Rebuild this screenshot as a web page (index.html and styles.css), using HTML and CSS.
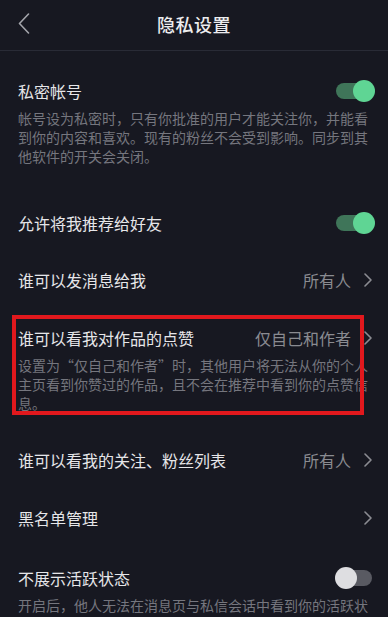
FILE: index.html
```html
<!DOCTYPE html>
<html lang="zh-CN">
<head>
<meta charset="utf-8">
<title>隐私设置</title>
<link rel="stylesheet" href="styles.css">
</head>
<body>
<div class="page">
  <header class="header">
    <span class="back">
      <svg width="12" height="21" viewBox="0 0 12 21"><path d="M10.5 1 L1.5 10.5 L10.5 20" fill="none" stroke="#a3a4aa" stroke-width="1.6" stroke-linecap="round" stroke-linejoin="round"/></svg>
    </span>
    <h1 class="title">隐私设置</h1>
  </header>

  <section class="item first">
    <div class="row">
      <span class="label">私密帐号</span>
      <span class="switch on"><span class="track"></span><span class="knob"></span></span>
    </div>
    <p class="desc">帐号设为私密时，只有你批准的用户才能关注你，并能看到你的内容和喜欢。现有的粉丝不会受到影响。同步到其他软件的开关会关闭。</p>
  </section>

  <section class="item after-desc-wide">
    <div class="row">
      <span class="label">允许将我推荐给好友</span>
      <span class="switch on"><span class="track"></span><span class="knob"></span></span>
    </div>
  </section>

  <section class="item tight">
    <div class="row">
      <span class="label">谁可以发消息给我</span>
      <span class="value">所有人<svg class="chev" width="8" height="14" viewBox="0 0 8 14"><path d="M1 1 L7 7 L1 13" fill="none" stroke="#8b8c92" stroke-width="1.6" stroke-linecap="round" stroke-linejoin="round"/></svg></span>
    </div>
  </section>

  <section class="item">
    <div class="row">
      <span class="label">谁可以看我对作品的点赞</span>
      <span class="value">仅自己和作者<svg class="chev" width="8" height="14" viewBox="0 0 8 14"><path d="M1 1 L7 7 L1 13" fill="none" stroke="#8b8c92" stroke-width="1.6" stroke-linecap="round" stroke-linejoin="round"/></svg></span>
    </div>
    <p class="desc">设置为“仅自己和作者”时，其他用户将无法从你的个人主页看到你赞过的作品，且不会在推荐中看到你的点赞信息。</p>
    <div class="highlight"></div>
  </section>

  <section class="item">
    <div class="row">
      <span class="label">谁可以看我的关注、粉丝列表</span>
      <span class="value">所有人<svg class="chev" width="8" height="14" viewBox="0 0 8 14"><path d="M1 1 L7 7 L1 13" fill="none" stroke="#8b8c92" stroke-width="1.6" stroke-linecap="round" stroke-linejoin="round"/></svg></span>
    </div>
  </section>

  <section class="item">
    <div class="row">
      <span class="label">黑名单管理</span>
      <span class="value"><svg class="chev" width="8" height="14" viewBox="0 0 8 14"><path d="M1 1 L7 7 L1 13" fill="none" stroke="#8b8c92" stroke-width="1.6" stroke-linecap="round" stroke-linejoin="round"/></svg></span>
    </div>
  </section>

  <section class="item loose">
    <div class="row">
      <span class="label">不展示活跃状态</span>
      <span class="switch off"><span class="track"></span><span class="knob"></span></span>
    </div>
    <p class="desc">开启后，他人无法在消息页与私信会话中看到你的活跃状态。</p>
  </section>
</div>
</body>
</html>
```

FILE: styles.css
```css
* { box-sizing: border-box; }

html, body {
  margin: 0;
  padding: 0;
  background: #171821;
}

body {
  font-family: "Noto Sans CJK SC", "Noto Sans", sans-serif;
  color: #e4e4e7;
  overflow: hidden;
}

.page {
  width: 388px;
  height: 617px;
  overflow: hidden;
}

.header {
  position: relative;
  height: 51px;
  display: flex;
  align-items: center;
  justify-content: center;
  border-bottom: 1px solid #292b36;
}

.back {
  position: absolute;
  left: 18px;
  top: 13px;
  display: flex;
}

.title {
  margin: 0 0 3px;
  font-size: 18px;
  font-weight: 500;
  color: #ececee;
  letter-spacing: 0.5px;
}

.item {
  position: relative;
  padding: 0 18px;
  margin-top: 36px;
}

.item.first { margin-top: 29px; }
.item.after-desc-wide { margin-top: 46px; }
.item.tight { margin-top: 35px; }
.item.loose { margin-top: 38px; }

.row {
  display: flex;
  align-items: center;
  justify-content: space-between;
  height: 22px;
}

.label {
  font-size: 16px;
  line-height: 22px;
  color: #e6e6e9;
}

.value {
  display: flex;
  align-items: center;
  font-size: 16px;
  line-height: 22px;
  color: #8a8b91;
  margin-right: -2px;
}

.chev {
  margin-left: 13px;
}

.desc {
  margin: 7px 0 0;
  font-size: 14px;
  line-height: 19px;
  color: #75767e;
}

.switch {
  position: relative;
  width: 40px;
  height: 22px;
  margin-right: -5px;
}

.switch .track {
  position: absolute;
  left: 1px;
  right: 3px;
  top: 3px;
  height: 16px;
  border-radius: 8px;
}

.switch .knob {
  position: absolute;
  top: 0;
  width: 22px;
  height: 22px;
  border-radius: 50%;
}

.switch.on .track { background: #3f7559; }
.switch.on .knob { right: 0; background: #5fd594; }

.switch.off .track { background: #595a62; }
.switch.off .knob { left: 0; background: #dedee1; }

.highlight {
  position: absolute;
  left: 12px;
  top: -12px;
  width: 352px;
  bottom: -2px;
  border: 4px solid #e1181d;
  pointer-events: none;
}
```
